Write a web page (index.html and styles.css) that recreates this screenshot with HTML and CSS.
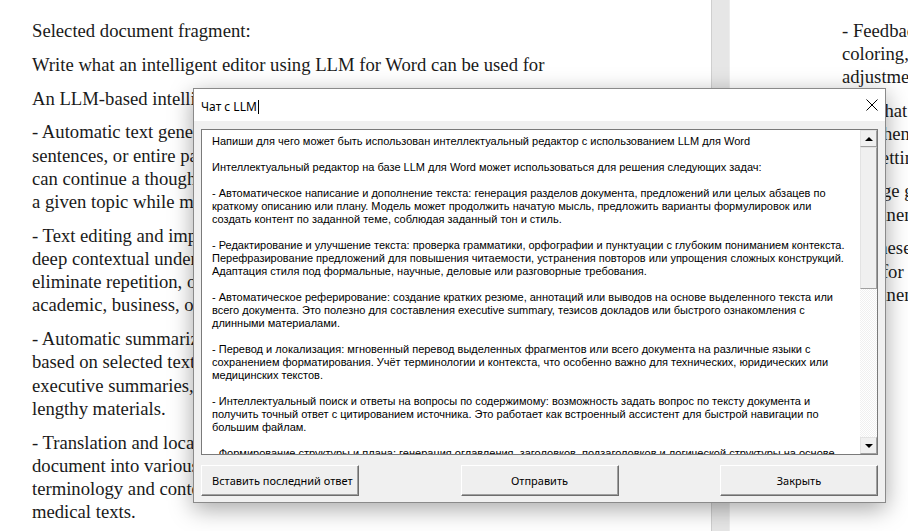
FILE: index.html
```html
<!DOCTYPE html>
<html lang="ru">
<head>
    <meta charset="UTF-8">
    <meta name="viewport" content="width=device-width, initial-scale=1.0">
    <title>Чат с LLM</title>
    <link rel="stylesheet" href="styles.css">
</head>
<body>
    <div class="desk">
        <div class="page page-left">
            <p>Selected document fragment:</p>
            <p>Write what an intelligent editor using LLM for Word can be used for</p>
            <p>An LLM-based intelligent editor for Word can be used for the following tasks:</p>
            <p>- Automatic text generation and completion: generating document sections,<br>sentences, or entire paragraphs based on a brief description or outline. The model<br>can continue a thought, suggest wording options, or create content on<br>a given topic while maintaining the specified tone and style.</p>
            <p>- Text editing and improvement: checking grammar, spelling and punctuation with<br>deep contextual understanding. Rephrasing sentences to improve readability,<br>eliminate repetition, or simplify complex constructions. Adapting style to formal,<br>academic, business, or conversational requirements.</p>
            <p>- Automatic summarization: creating brief summaries, annotations or conclusions<br>based on selected text or the entire document. Useful for preparing<br>executive summaries, report abstracts, or quick familiarization with<br>lengthy materials.</p>
            <p>- Translation and localization: instant translation of selected fragments or the entire<br>document into various languages while preserving formatting. Taking into account<br>terminology and context, which is especially important for technical, legal, or<br>medical texts.</p>
        </div>
        <div class="gutter"></div>
        <div class="page page-right">
            <p>- Feedback and<br>coloring, tone<br>adjustments.</p>
            <p>- AI chat<br>and phenomena<br>and setting up</p>
            <p>- Image generation<br>prominent</p>
            <p>- In these<br>style for<br>prominent</p>
        </div>
    </div>

    <div class="dialog">
        <div class="dialog-title">
            <span class="title-text">Чат с LLM<span class="caret"></span></span>
            <svg class="close-icon" width="12" height="12" viewBox="0 0 12 12">
                <path d="M0.5 0.5 L11.5 11.5 M11.5 0.5 L0.5 11.5" stroke="#000" stroke-width="1" fill="none"/>
            </svg>
        </div>
        <div class="dialog-body">
            <div class="chat-box">
                <div class="chat-text">
                    <p>Напиши для чего может быть использован интеллектуальный редактор с использованием LLM для Word</p>
                    <p>Интеллектуальный редактор на базе LLM для Word может использоваться для решения следующих задач:</p>
                    <p>- Автоматическое написание и дополнение текста: генерация разделов документа, предложений или целых абзацев по<br>краткому описанию или плану. Модель может продолжить начатую мысль, предложить варианты формулировок или<br>создать контент по заданной теме, соблюдая заданный тон и стиль.</p>
                    <p>- Редактирование и улучшение текста: проверка грамматики, орфографии и пунктуации с глубоким пониманием контекста.<br>Перефразирование предложений для повышения читаемости, устранения повторов или упрощения сложных конструкций.<br>Адаптация стиля под формальные, научные, деловые или разговорные требования.</p>
                    <p>- Автоматическое реферирование: создание кратких резюме, аннотаций или выводов на основе выделенного текста или<br>всего документа. Это полезно для составления executive summary, тезисов докладов или быстрого ознакомления с<br>длинными материалами.</p>
                    <p>- Перевод и локализация: мгновенный перевод выделенных фрагментов или всего документа на различные языки с<br>сохранением форматирования. Учёт терминологии и контекста, что особенно важно для технических, юридических или<br>медицинских текстов.</p>
                    <p>- Интеллектуальный поиск и ответы на вопросы по содержимому: возможность задать вопрос по тексту документа и<br>получить точный ответ с цитированием источника. Это работает как встроенный ассистент для быстрой навигации по<br>большим файлам.</p>
                    <p>- Формирование структуры и плана: генерация оглавления, заголовков, подзаголовков и логической структуры на основе<br>содержания документа.</p>
                </div>
                <div class="scrollbar">
                    <div class="sb-button"><span class="arrow-up"></span></div>
                    <div class="sb-thumb"></div>
                    <div class="sb-track"></div>
                    <div class="sb-button"><span class="arrow-down"></span></div>
                </div>
            </div>
            <div class="buttons">
                <button type="button">Вставить последний ответ</button>
                <button type="button">Отправить</button>
                <button type="button">Закрыть</button>
            </div>
        </div>
    </div>
</body>
</html>
```

FILE: styles.css
```css
body {
    margin: 0;
    padding: 0;
    width: 908px;
    height: 531px;
    overflow: hidden;
    position: relative;
    background-color: #fff;
}

.desk {
    display: flex;
    height: 531px;
}

.page {
    background-color: #fff;
    font-family: "Liberation Serif", "Times New Roman", serif;
    font-size: 18.67px;
    line-height: 23.2px;
    color: #1a1a1a;
    overflow: hidden;
    white-space: nowrap;
}

.page p {
    margin: 0 0 10.6px 0;
}

.page-left {
    width: 679px;
    padding: 19px 0 0 32px;
}

.gutter {
    width: 17px;
    background-color: #e6e6e6;
    border-left: 1px solid #cfcfcf;
    border-right: 1px solid #ededed;
}

.page-right {
    flex: 1;
    padding: 19px 0 0 112px;
}

/* dialog window */

.dialog {
    position: absolute;
    left: 193px;
    top: 88px;
    width: 691px;
    height: 413px;
    border: 1px solid #8a8a8a;
    background-color: #f0f0f0;
    box-shadow: 0 6px 22px rgba(0, 0, 0, 0.35);
    display: flex;
    flex-direction: column;
    font-family: "Noto Sans", "Open Sans", sans-serif;
    color: #000;
}

.dialog-title {
    height: 33px;
    background-color: #fff;
    display: flex;
    align-items: center;
    justify-content: space-between;
    padding: 0 7px 0 7px;
}

.title-text {
    font-size: 12px;
    display: flex;
    align-items: center;
    margin-top: 3px;
}

.caret {
    display: inline-block;
    width: 1px;
    height: 14px;
    background-color: #000;
    margin-left: 1px;
}

.close-icon {
    margin-top: -1px;
}

.dialog-body {
    flex: 1;
    display: flex;
    flex-direction: column;
    padding: 8px 7px 6px 7px;
}

.chat-box {
    height: 324px;
    border: 1px solid #7a7a7a;
    background-color: #fff;
    display: flex;
}

.chat-text {
    flex: 1;
    overflow: hidden;
    padding: 5px 0 0 10px;
    font-family: "Liberation Sans", Arial, sans-serif;
    font-size: 11px;
    line-height: 13px;
    white-space: nowrap;
}

.chat-text p {
    margin: 0 0 13px 0;
}

.scrollbar {
    width: 17px;
    display: flex;
    flex-direction: column;
}

.sb-button {
    height: 15px;
    background-color: #f0f0f0;
    border: 1px solid;
    border-color: #e3e3e3 #a0a0a0 #a0a0a0 #e3e3e3;
    display: flex;
    align-items: center;
    justify-content: center;
}

.arrow-up {
    width: 0;
    height: 0;
    border-left: 4px solid transparent;
    border-right: 4px solid transparent;
    border-bottom: 4px solid #000;
}

.arrow-down {
    width: 0;
    height: 0;
    border-left: 4px solid transparent;
    border-right: 4px solid transparent;
    border-top: 4px solid #000;
}

.sb-thumb {
    height: 140px;
    background-color: #f0f0f0;
    border: 1px solid;
    border-color: #e3e3e3 #a0a0a0 #a0a0a0 #e3e3e3;
}

.sb-track {
    flex: 1;
    background-color: #fff;
    background-image: repeating-conic-gradient(#f0f0f0 0 25%, #fff 0 50%);
    background-size: 2px 2px;
}

.buttons {
    display: flex;
    justify-content: space-between;
    margin-top: 10px;
}

button {
    width: 158px;
    height: 31px;
    background-color: #efefef;
    border: 1px solid;
    border-color: #fff #6d6d6d #6d6d6d #fff;
    box-shadow: inset -1px -1px 0 #a0a0a0;
    font-family: "Noto Sans", "Open Sans", sans-serif;
    font-size: 11px;
    color: #000;
    padding: 0;
    white-space: nowrap;
    cursor: pointer;
}

button:first-child {
    text-align: left;
    padding-left: 10px;
}
```
